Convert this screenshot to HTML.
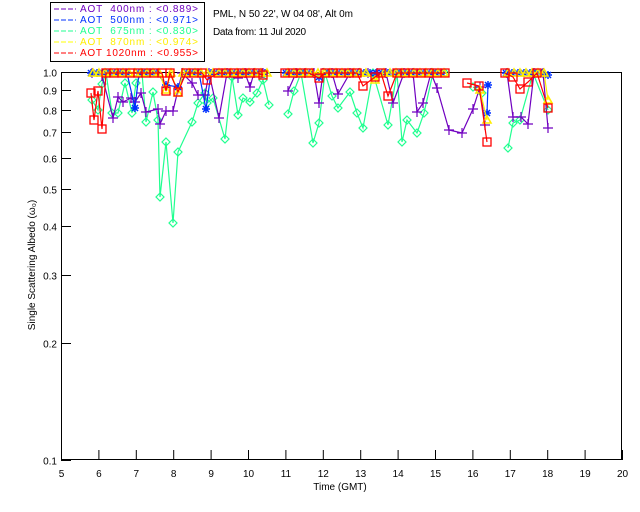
<!DOCTYPE html>
<html><head><meta charset="utf-8"><style>
body{margin:0;background:#fff;width:640px;height:512px;overflow:hidden}
svg{display:block}
text{font-family:"Liberation Sans",sans-serif;font-size:10px}
</style></head><body>
<svg id="s" width="640" height="512" xmlns="http://www.w3.org/2000/svg">
<rect x="50.5" y="2.5" width="154" height="59" fill="none" stroke="#000"/>
<g font-size="10">
<line x1="54" y1="9" x2="76" y2="9" stroke="#7000c0" stroke-dasharray="5,2"/><text x="80" y="12" fill="#7000c0" textLength="118" lengthAdjust="spacing" xml:space="preserve">AOT  400nm : &lt;0.889&gt;</text>
<line x1="54" y1="20" x2="76" y2="20" stroke="#0030ff" stroke-dasharray="5,2"/><text x="80" y="23" fill="#0030ff" textLength="118" lengthAdjust="spacing" xml:space="preserve">AOT  500nm : &lt;0.971&gt;</text>
<line x1="54" y1="31" x2="76" y2="31" stroke="#20ff90" stroke-dasharray="5,2"/><text x="80" y="34" fill="#20ff90" textLength="118" lengthAdjust="spacing" xml:space="preserve">AOT  675nm : &lt;0.830&gt;</text>
<line x1="54" y1="42" x2="76" y2="42" stroke="#ffff00" stroke-dasharray="5,2"/><text x="80" y="45" fill="#ffee00" textLength="118" lengthAdjust="spacing" xml:space="preserve">AOT  870nm : &lt;0.974&gt;</text>
<line x1="54" y1="53" x2="76" y2="53" stroke="#ff0000" stroke-dasharray="5,2"/><text x="80" y="56" fill="#ff0000" textLength="118" lengthAdjust="spacing" xml:space="preserve">AOT 1020nm : &lt;0.955&gt;</text>
</g>
<text x="213" y="17" textLength="140" lengthAdjust="spacing">PML, N 50 22', W 04 08', Alt 0m</text>
<text x="213" y="35" textLength="93" lengthAdjust="spacing">Data from: 11 Jul 2020</text>
<rect x="61.5" y="72.5" width="560" height="387" fill="none" stroke="#000"/>
<g id="ax" stroke="#000"></g>
<g id="lab" font-size="10"></g>
<text x="340" y="490" text-anchor="middle">Time (GMT)</text>
<text transform="translate(35,265) rotate(-90)" text-anchor="middle">Single Scattering Albedo (ω₀)</text>
<g id="data"></g>
</svg>
<script>
var NS="http://www.w3.org/2000/svg",ax=document.getElementById('ax'),lab=document.getElementById('lab'),dg=document.getElementById('data');
function el(p,t,a,txt){var e=document.createElementNS(NS,t);for(var k in a)e.setAttribute(k,a[k]);if(txt)e.textContent=txt;p.appendChild(e);return e}
for(var i=0;i<=15;i++){var x=61.5+i*37.4;el(ax,'line',{x1:x,y1:460,x2:x,y2:450});el(lab,'text',{x:x,y:477,'text-anchor':'middle'},String(5+i));}
function Y(v){return 460-(Math.log10(v)+1)*388}
[0.1,0.2,0.3,0.4,0.5,0.6,0.7,0.8,0.9,1.0].forEach(function(v){var y=Math.round(Y(v))+.5;el(ax,'line',{x1:61,y1:y,x2:71,y2:y});el(lab,'text',{x:57,y:y+4,'text-anchor':'end'},v.toFixed(1));});
var ranges=[[90,270],[285,445],[505,550]];
function mk(dips,step,off){var pts=dips.slice();ranges.forEach(function(r){for(var x=r[0]+off;x<=r[1];x+=step){var ok=true;dips.forEach(function(d){if(Math.abs(d[0]-x)<4)ok=false});if(ok)pts.push([x,73]);}});pts.sort(function(a,b){return a[0]-b[0]});return pts}
var S=[
{c:"#20ff90",m:"d",p:mk([[92,100],[98,110],[102,84],[112,113],[118,113],[125,83],[132,113],[136,83],[146,122],[153,92],[158,120],[160,197],[166,142],[173,223],[178,152],[192,122],[198,103],[205,93],[207,103],[213,98],[225,139],[232,77],[238,115],[243,98],[250,102],[257,93],[263,80],[269,105],[288,114],[294,91],[313,143],[319,123],[332,96],[338,108],[350,92],[357,113],[363,128],[388,125],[402,142],[407,120],[417,133],[424,113],[473,87],[482,93],[508,148],[513,123],[520,120],[548,110]],12,4)},
{c:"#7000c0",m:"p",p:mk([[102,76],[113,118],[118,97],[123,102],[131,98],[135,102],[141,93],[146,112],[158,109],[160,124],[166,111],[173,111],[192,83],[198,95],[205,95],[219,118],[238,78],[250,87],[288,91],[319,103],[338,94],[393,103],[417,112],[423,103],[437,88],[449,130],[462,133],[473,109],[480,87],[485,125],[513,117],[521,117],[528,124],[548,128]],9,2)},
{c:"#0030ff",m:"s",p:mk([[135,108],[166,85],[178,87],[206,109],[319,77],[488,85],[487,113],[548,75]],6,1)},
{c:"#ffee00",m:"t",p:mk([[166,90],[178,93],[375,80],[480,90],[487,120],[548,100]],6,3)},
{c:"#ff0000",m:"q",p:mk([[91,93],[94,120],[98,91],[102,129],[166,91],[178,92],[207,80],[263,75],[319,78],[363,86],[375,77],[388,96],[467,83],[479,86],[487,142],[513,77],[520,89],[528,82],[548,108]],8,0)}
];
S.forEach(function(s){var seg=[],segs=[];s.p.forEach(function(p,i){if(i&&p[0]-s.p[i-1][0]>16){segs.push(seg);seg=[]}seg.push(p)});segs.push(seg);
segs.forEach(function(g){el(dg,'polyline',{points:g.map(function(p){return p.join(',')}).join(' '),fill:'none',stroke:s.c,'stroke-width':1.2})});
s.p.forEach(function(p){var x=p[0],y=p[1],a={fill:'none',stroke:s.c,'stroke-width':1.2};
if(s.m=='d'){a.points=[x,y-4,x+4,y,x,y+4,x-4,y].join(',');el(dg,'polygon',a)}
else if(s.m=='p'){a.d='M'+(x-5)+' '+y+'h10M'+x+' '+(y-5)+'v10';el(dg,'path',a)}
else if(s.m=='s'){a.d='M'+(x-4)+' '+y+'h8M'+x+' '+(y-4)+'v8M'+(x-3)+' '+(y-3)+'l6 6M'+(x+3)+' '+(y-3)+'l-6 6';a['stroke-width']=1.5;el(dg,'path',a)}
else if(s.m=='t'){a.points=[x,y-4,x+4,y+3,x-4,y+3].join(',');a['stroke-width']=1.6;el(dg,'polygon',a)}
else{a.x=x-4;a.y=y-4;a.width=8;a.height=8;a['stroke-width']=1.3;el(dg,'rect',a)}});});
</script>
</body></html>
